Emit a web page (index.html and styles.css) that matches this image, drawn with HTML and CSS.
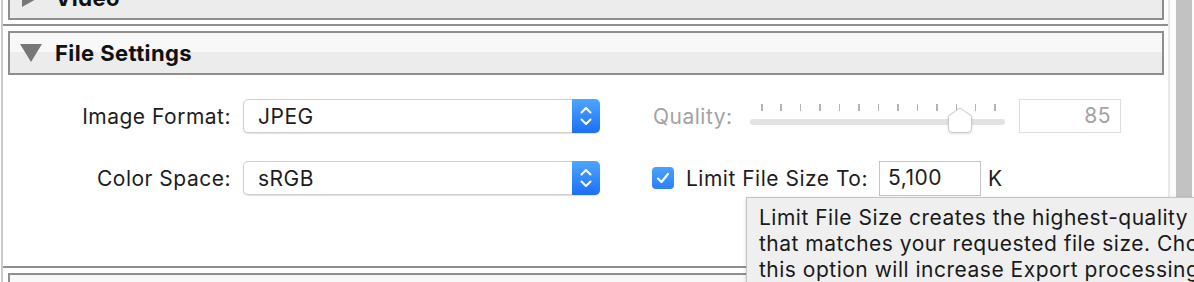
FILE: index.html
```html
<!DOCTYPE html>
<html lang="en">
<head>
    <meta charset="UTF-8">
    <title>Export - File Settings</title>
    <link rel="stylesheet" href="styles.css">
</head>
<body>
    <div class="window">
        <div class="panel">

            <!-- Video (collapsed) -->
            <section class="section video">
                <div class="section-head">
                    <span class="disclosure closed"></span>Video
                </div>
            </section>
            <div class="rule"></div>

            <!-- File Settings -->
            <section class="section">
                <div class="section-head">
                    <span class="disclosure open"></span>File Settings
                </div>
                <div class="section-body">
                    <div class="form-left">
                        <span class="label">Image Format:</span>
                        <div class="popup">
                            <span class="popup-value">JPEG</span>
                            <span class="stepper">
                                <svg width="28" height="34" viewBox="0 0 28 34"><path d="M9.5 13.5 L14 9 L18.5 13.5 M9.5 20.5 L14 25 L18.5 20.5" fill="none" stroke="#fff" stroke-width="2" stroke-linecap="round" stroke-linejoin="round"/></svg>
                            </span>
                        </div>
                        <span class="label">Color Space:</span>
                        <div class="popup">
                            <span class="popup-value">sRGB</span>
                            <span class="stepper">
                                <svg width="28" height="34" viewBox="0 0 28 34"><path d="M9.5 13.5 L14 9 L18.5 13.5 M9.5 20.5 L14 25 L18.5 20.5" fill="none" stroke="#fff" stroke-width="2" stroke-linecap="round" stroke-linejoin="round"/></svg>
                            </span>
                        </div>
                    </div>

                    <div class="form-right">
                        <div class="row">
                            <span class="label dim quality-label">Quality:</span>
                            <div class="slider">
                                <div class="ticks">
                                    <i></i><i></i><i></i><i></i><i></i><i></i><i></i><i></i><i></i><i></i><i></i><i></i><i></i>
                                </div>
                                <div class="track"></div>
                                <svg class="knob" width="26" height="27" viewBox="0 0 26 27"><path d="M1.5 9 L13 1 L24.5 9 V22 Q24.5 25.5 21 25.5 H5 Q1.5 25.5 1.5 22 Z" fill="#fff" stroke="#c9c9c9" stroke-width="1"/></svg>
                            </div>
                            <div class="field dim-field">85</div>
                        </div>
                        <div class="row">
                            <span class="checkbox">
                                <svg width="22" height="22" viewBox="0 0 22 22"><path d="M6 11.5 L9.5 15 L16 7" fill="none" stroke="#fff" stroke-width="2.2" stroke-linecap="round" stroke-linejoin="round"/></svg>
                            </span>
                            <span class="label check-label">Limit File Size To:</span>
                            <div class="field size-field">5,100</div>
                            <span class="label unit">K</span>
                        </div>
                    </div>
                </div>
            </section>
            <div class="rule"></div>

            <!-- next section, cut off -->
            <section class="section">
                <div class="section-head"></div>
            </section>
        </div>

        <div class="scrollbar"><div class="thumb"></div></div>

        <!-- Tooltip -->
        <div class="tooltip">
            Limit File Size creates the highest-quality image<br>
            that matches your requested file size. Choosing<br>
            this option will increase Export processing time.
        </div>
    </div>
</body>
</html>
```

FILE: styles.css
```css
body {
    margin: 0;
    font-family: 'Inter', 'Liberation Sans', sans-serif;
    color: #1d1d1d;
    background: #fff;
    overflow: hidden;
}
.window {
    position: relative;
    display: flex;
    height: 282px;
    overflow: hidden;
}
.panel {
    flex: 1;
    margin-left: 1px;
    border-left: 2px solid #cacaca;
}
.rule {
    height: 2px;
    background: #8f8f8f;
    margin: 4px 0 5px;
}
.section-head {
    display: flex;
    align-items: center;
    height: 40px;
    margin: 0 4px 0 5px;
    padding-left: 10px;
    border: 2px solid #8e8e8e;
    background: linear-gradient(#f8f8f8 0, #f8f8f8 48%, #ececec 48%, #ececec 100%);
    font-size: 22px;
    font-weight: 700;
    letter-spacing: 0.4px;
    color: #111;
}
.video {
    margin-top: -24px;
}
.disclosure {
    width: 0;
    height: 0;
    margin-right: 13px;
}
.disclosure.open {
    border-left: 11px solid transparent;
    border-right: 11px solid transparent;
    border-top: 18px solid #777;
}
.disclosure.closed {
    margin-left: 2px;
    margin-right: 17px;
    border-top: 9px solid transparent;
    border-bottom: 9px solid transparent;
    border-left: 16px solid #777;
}
.section-body {
    display: flex;
    height: 163px;
    padding-top: 24px;
    background: #fff;
}
.label {
    font-size: 21px;
    letter-spacing: 0.5px;
    color: #1d1d1d;
    white-space: nowrap;
}
.label.dim {
    color: #a3a3a3;
}
.form-left {
    display: grid;
    grid-template-columns: 228px 357px;
    grid-auto-rows: 34px;
    column-gap: 12px;
    row-gap: 28px;
    align-items: center;
}
.form-left .label {
    text-align: right;
}
.popup {
    display: flex;
    align-items: center;
    height: 34px;
    box-sizing: border-box;
    border: 1px solid #cfcfcf;
    border-radius: 5px;
    background: #fff;
    box-shadow: 0 1px 1px rgba(0, 0, 0, 0.12);
    font-size: 21px;
    letter-spacing: 0.5px;
}
.popup-value {
    flex: 1;
    padding-left: 14px;
}
.stepper {
    display: block;
    width: 28px;
    height: 34px;
    margin: -1px -1px -1px 0;
    border-radius: 0 5px 5px 0;
    background: linear-gradient(#4ea6ff, #1c6ff4);
}
.stepper svg {
    display: block;
}
.form-right {
    display: flex;
    flex-direction: column;
    gap: 28px;
    margin-left: 53px;
}
.row {
    display: flex;
    align-items: center;
    height: 34px;
}
.quality-label {
    width: 78px;
}
.slider {
    position: relative;
    width: 255px;
    height: 34px;
    margin-left: 19px;
}
.ticks {
    display: flex;
    justify-content: space-between;
    height: 7px;
    margin-top: 5px;
    padding: 0 9px 0 11px;
}
.ticks i {
    width: 1.5px;
    background: #b3b3b3;
}
.track {
    height: 6px;
    margin-top: 8px;
    border-radius: 3px;
    background: #e3e3e3;
}
.knob {
    position: absolute;
    left: 197px;
    top: 8px;
    filter: drop-shadow(0 1px 1px rgba(0, 0, 0, 0.12));
}
.field {
    box-sizing: border-box;
    height: 34px;
    width: 102px;
    border: 1px solid #d3d3d3;
    font-size: 21px;
    letter-spacing: 0.5px;
    line-height: 32px;
    background: #fff;
}
.dim-field {
    margin-left: 14px;
    padding-right: 9px;
    text-align: right;
    color: #a3a3a3;
    border-color: #dedede;
}
.checkbox {
    display: block;
    width: 22px;
    height: 22px;
    margin-left: -1px;
    border-radius: 4px;
    background: linear-gradient(#4aa2ff, #2a80f6);
}
.checkbox svg {
    display: block;
}
.check-label {
    margin-left: 12px;
}
.size-field {
    height: 35px;
    margin-left: 11px;
    padding-left: 8px;
    color: #1d1d1d;
    border-color: #c4c4c4;
}
.unit {
    margin-left: 7px;
}
.scrollbar {
    border-left: 2px solid #e8e8e8;
    background: #fbfbfb;
    padding: 0 2px 0 6px;
    box-sizing: border-box;
    width: 26px;
}
.thumb {
    height: 100%;
    background: #c2c2c2;
}
.tooltip {
    position: absolute;
    left: 746px;
    top: 197px;
    width: 520px;
    height: 120px;
    padding: 7px 12px;
    border: 1px solid #c3c3c3;
    background: #efefef;
    font-size: 21px;
    letter-spacing: 0.5px;
    line-height: 26px;
    color: #1a1a1a;
    white-space: nowrap;
    box-shadow: 0 1px 4px rgba(0, 0, 0, 0.15);
}
```
